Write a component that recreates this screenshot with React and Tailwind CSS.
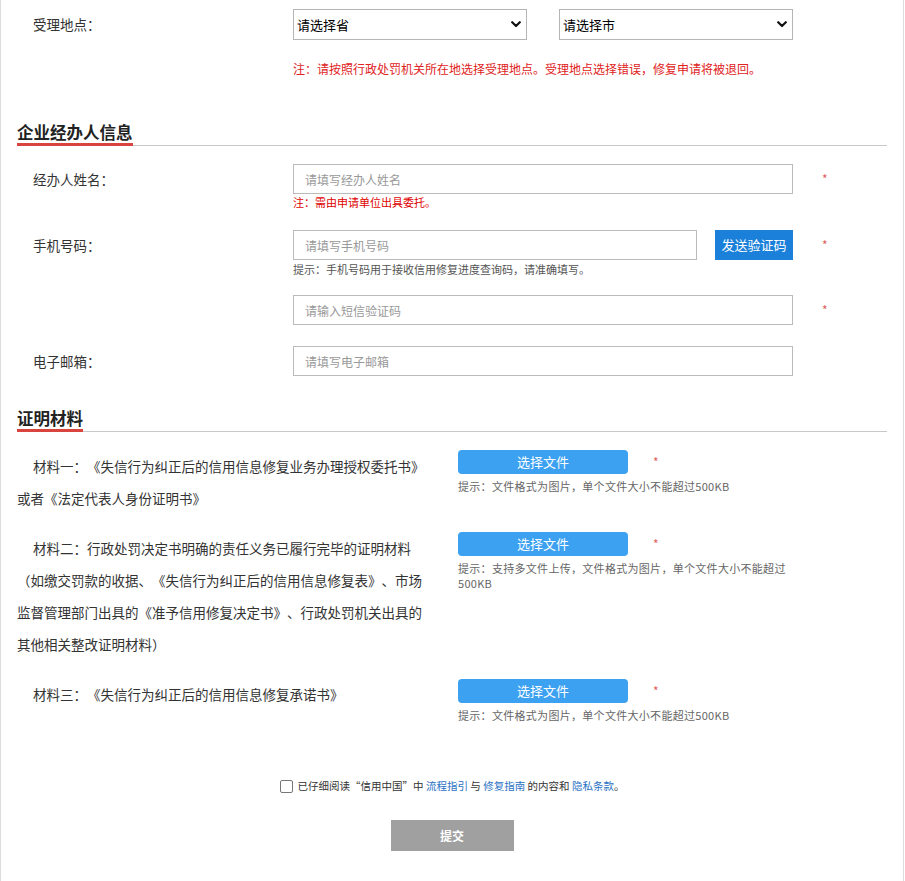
import React from "react";

function Chevron() {
  return (
    <svg width="10" height="7" viewBox="0 0 10 7" className="absolute right-[6px] top-[12px]">
      <polyline points="1.2,1.2 5,5 8.8,1.2" fill="none" stroke="#111" strokeWidth="2.2" strokeLinecap="round" strokeLinejoin="round" />
    </svg>
  );
}

function Select({ label }) {
  return (
    <div className="relative w-[234px] h-[31px]">
      <select className="appearance-none w-full h-full border border-[#b5b5b5] bg-white pl-[3px] text-[13px] text-black outline-none">
        <option>{label}</option>
      </select>
      <Chevron />
    </div>
  );
}

function Star({ className = "" }) {
  return <span className={"text-[#e06060] text-[12px] leading-none " + className}>*</span>;
}

function SectionTitle({ children, className = "" }) {
  return (
    <div className={"border-b border-[#c8c8c8] " + className}>
      <span className="inline-block -mb-px border-b-[3px] border-[#d9443f] text-[16.5px] leading-[22px] font-bold text-[#222]">
        {children}
      </span>
    </div>
  );
}

function TextInput({ placeholder, w = "w-[500px]" }) {
  return (
    <input
      className={w + " h-[30px] border border-[#bbb] px-[11px] text-[12px] placeholder:text-[#999] outline-none bg-white"}
      placeholder={placeholder}
    />
  );
}

function FileCol({ hint }) {
  return (
    <div>
      <div className="flex items-center">
        <button className="w-[170px] h-[24px] rounded-[4px] bg-[#3ca1f1] text-white text-[13px] leading-[24px]">选择文件</button>
        <Star className="ml-[25px]" />
      </div>
      <p className="mt-[5px] w-[330px] text-[11px] leading-[15px] tracking-[0.3px] text-[#666]">{hint}</p>
    </div>
  );
}

export default function App() {
  return (
    <div className="w-[904px] min-h-[881px] bg-white border-x border-[#ddd] px-4 text-[#333] [text-spacing-trim:space-all] font-['Noto_Sans_CJK_SC','Microsoft_YaHei',sans-serif]">
      {/* 受理地点 */}
      <div className="flex pt-[9px]">
        <div className="w-[276px] pl-4 h-[31px] flex items-center text-[13.5px]">受理地点：</div>
        <div className="flex gap-[32px]">
          <Select label="请选择省" />
          <Select label="请选择市" />
        </div>
      </div>
      <p className="ml-[276px] mt-[21px] text-[12px] leading-[16px] text-[#e02222]">
        注：请按照行政处罚机关所在地选择受理地点。受理地点选择错误，修复申请将被退回。
      </p>

      <SectionTitle className="mt-[43px]">企业经办人信息</SectionTitle>

      {/* 姓名 */}
      <div className="flex items-center mt-[18px]">
        <div className="w-[276px] pl-4 text-[13.5px]">经办人姓名：</div>
        <TextInput placeholder="请填写经办人姓名" />
        <Star className="ml-[29px]" />
      </div>
      <p className="ml-[276px] mt-px text-[11px] leading-[14px] text-[#e00000]">注：需由申请单位出具委托。</p>

      {/* 手机 */}
      <div className="flex items-center mt-[21px]">
        <div className="w-[276px] pl-4 text-[13.5px]">手机号码：</div>
        <TextInput placeholder="请填写手机号码" w="w-[404px]" />
        <button className="ml-[18px] w-[78px] h-[30px] bg-[#1a80d9] text-white text-[13px]">发送验证码</button>
        <Star className="ml-[29px]" />
      </div>
      <p className="ml-[276px] mt-[2px] text-[11px] leading-[14px] text-[#555]">
        提示：手机号码用于接收信用修复进度查询码，请准确填写。
      </p>

      {/* 验证码 */}
      <div className="flex items-center mt-[19px]">
        <div className="w-[276px]" />
        <TextInput placeholder="请输入短信验证码" />
        <Star className="ml-[29px]" />
      </div>

      {/* 邮箱 */}
      <div className="flex items-center mt-[21px]">
        <div className="w-[276px] pl-4 text-[13.5px]">电子邮箱：</div>
        <TextInput placeholder="请填写电子邮箱" />
      </div>

      <SectionTitle className="mt-[30px]">证明材料</SectionTitle>

      {/* 材料一 */}
      <div className="flex mt-[18px]">
        <div className="w-[441px]">
          <p className="w-[425px] indent-4 text-[13.5px] leading-[32px]">
            材料一：《失信行为纠正后的信用信息修复业务办理授权委托书》
            <br />
            或者《法定代表人身份证明书》
          </p>
        </div>
        <FileCol hint="提示：文件格式为图片，单个文件大小不能超过500KB" />
      </div>

      {/* 材料二 */}
      <div className="flex mt-[18px]">
        <div className="w-[441px]">
          <p className="w-[425px] indent-4 text-[13.5px] leading-[32px]">
            材料二：行政处罚决定书明确的责任义务已履行完毕的证明材料
            <br />
            （如缴交罚款的收据、《失信行为纠正后的信用信息修复表》、市场
            <br />
            监督管理部门出具的《准予信用修复决定书》、行政处罚机关出具的
            <br />
            其他相关整改证明材料）
          </p>
        </div>
        <FileCol hint="提示：支持多文件上传，文件格式为图片，单个文件大小不能超过500KB" />
      </div>

      {/* 材料三 */}
      <div className="flex mt-[18px]">
        <div className="w-[441px]">
          <p className="w-[425px] indent-4 text-[13.5px] leading-[32px]">
            材料三：《失信行为纠正后的信用信息修复承诺书》
          </p>
        </div>
        <div className="pt-px">
          <FileCol hint="提示：文件格式为图片，单个文件大小不能超过500KB" />
        </div>
      </div>

      {/* 协议 */}
      <div className="flex justify-center items-center mt-[55px] text-[10.5px] leading-[16px]">
        <span className="w-[13px] h-[13px] border border-[#777] rounded-[2px] mr-[5px]" />
        <span>
          已仔细阅读“信用中国”中 <a className="text-[#2a72c4]">流程指引</a> 与 <a className="text-[#2a72c4]">修复指南</a> 的内容和{" "}
          <a className="text-[#2a72c4]">隐私条款</a>。
        </span>
      </div>

      <div className="flex justify-center mt-[26px] pb-[29px]">
        <button className="w-[123px] h-[31px] bg-[#a0a0a0] text-white text-[12px] font-bold">提交</button>
      </div>
    </div>
  );
}
